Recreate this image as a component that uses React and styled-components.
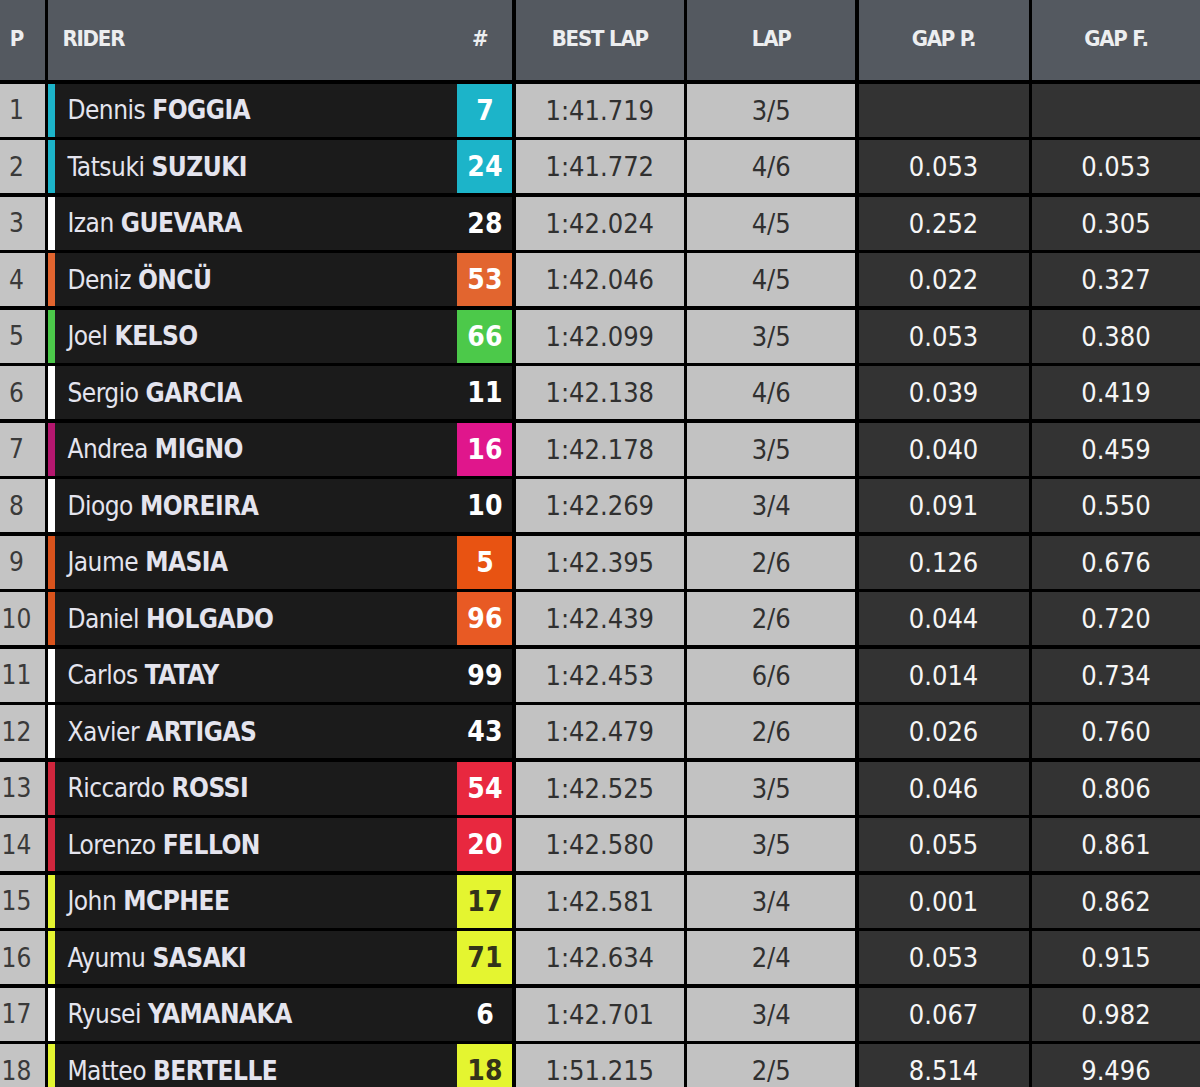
import React from "react";
import styled, { createGlobalStyle } from "styled-components";

const Global = createGlobalStyle`
  html, body { margin: 0; padding: 0; background: #000; }
  body { font-family: "DejaVu Sans Condensed", "Liberation Sans Narrow", "Open Sans", sans-serif; }
`;

const riders = [
  [1, "Dennis", "FOGGIA", "7", "#1cb4c9", "#1cb4c9", "1:41.719", "3/5", "", ""],
  [2, "Tatsuki", "SUZUKI", "24", "#1cb4c9", "#1cb4c9", "1:41.772", "4/6", "0.053", "0.053"],
  [3, "Izan", "GUEVARA", "28", "#ffffff", null, "1:42.024", "4/5", "0.252", "0.305"],
  [4, "Deniz", "ÖNCÜ", "53", "#e2652f", "#e2652f", "1:42.046", "4/5", "0.022", "0.327"],
  [5, "Joel", "KELSO", "66", "#4cc94a", "#4cc94a", "1:42.099", "3/5", "0.053", "0.380"],
  [6, "Sergio", "GARCIA", "11", "#ffffff", null, "1:42.138", "4/6", "0.039", "0.419"],
  [7, "Andrea", "MIGNO", "16", "#b5176f", "#e0168c", "1:42.178", "3/5", "0.040", "0.459"],
  [8, "Diogo", "MOREIRA", "10", "#ffffff", null, "1:42.269", "3/4", "0.091", "0.550"],
  [9, "Jaume", "MASIA", "5", "#d9531c", "#e85312", "1:42.395", "2/6", "0.126", "0.676"],
  [10, "Daniel", "HOLGADO", "96", "#d9531c", "#e85a24", "1:42.439", "2/6", "0.044", "0.720"],
  [11, "Carlos", "TATAY", "99", "#ffffff", null, "1:42.453", "6/6", "0.014", "0.734"],
  [12, "Xavier", "ARTIGAS", "43", "#ffffff", null, "1:42.479", "2/6", "0.026", "0.760"],
  [13, "Riccardo", "ROSSI", "54", "#d0263d", "#e8283f", "1:42.525", "3/5", "0.046", "0.806"],
  [14, "Lorenzo", "FELLON", "20", "#d0263d", "#e8283f", "1:42.580", "3/5", "0.055", "0.861"],
  [15, "John", "MCPHEE", "17", "#e4f530", "#e4f530", "1:42.581", "3/4", "0.001", "0.862"],
  [16, "Ayumu", "SASAKI", "71", "#e4f530", "#e4f530", "1:42.634", "2/4", "0.053", "0.915"],
  [17, "Ryusei", "YAMANAKA", "6", "#ffffff", null, "1:42.701", "3/4", "0.067", "0.982"],
  [18, "Matteo", "BERTELLE", "18", "#e4f530", "#e4f530", "1:51.215", "2/5", "8.514", "9.496"],
];

const Page = styled.div`
  width: 1200px;
  height: 1087px;
  overflow: hidden;
  background: #000;
`;

const Table = styled.div`
  display: grid;
  grid-template-columns: 45px 464px 168px 168px 170px 168px;
  column-gap: 3.4px;
  row-gap: 3.5px;
  grid-auto-rows: 53px;
  grid-template-rows: 80px;
  background: #000;
`;

const Head = styled.div`
  background: #545960;
  color: #eceef0;
  font-weight: bold;
  font-size: 22px;
  letter-spacing: -1.2px;
  display: flex;
  align-items: center;
  justify-content: ${(p) => p.$align || "center"};
  padding: ${(p) => p.$pad || "0"};
  padding-bottom: 4px;
`;

const PosCell = styled.div`
  background: #c4c4c4;
  color: #3a3a3a;
  font-size: 26px;
  display: flex;
  align-items: center;
  justify-content: center;
  padding-right: 12px;
`;

const RiderCell = styled.div`
  background: #1b1b1b;
  display: flex;
  align-items: stretch;
`;

const Strip = styled.div`
  width: 7px;
  background: ${(p) => p.$color};
`;

const Name = styled.div`
  flex: 1;
  display: flex;
  align-items: center;
  padding-left: 12px;
  color: #e4e4ee;
  font-size: 26px;
  white-space: nowrap;
  letter-spacing: -0.5px;
  b { font-weight: bold; margin-left: 7px; }
`;

const Num = styled.div`
  width: 55px;
  background: ${(p) => p.$bg || "transparent"};
  color: ${(p) => (p.$dark ? "#33331a" : "#ffffff")};
  font-weight: 800;
  font-size: 28px;
  display: flex;
  align-items: center;
  justify-content: center;
`;

const LightCell = styled.div`
  background: #c2c2c2;
  color: #303030;
  font-size: 27px;
  display: flex;
  align-items: center;
  justify-content: center;
`;

const DarkCell = styled.div`
  background: #333333;
  color: #f6f6f6;
  font-size: 27px;
  font-weight: 500;
  display: flex;
  align-items: center;
  justify-content: center;
`;

export default function App() {
  return (
    <Page>
      <Global />
      <Table>
        <Head $pad="0 12px 0 0">P</Head>
        <Head $align="space-between" $pad="0 25px 0 14px">
          <span>RIDER</span>
          <span>#</span>
        </Head>
        <Head>BEST LAP</Head>
        <Head>LAP</Head>
        <Head>GAP P.</Head>
        <Head>GAP F.</Head>
        {riders.map(([pos, first, last, num, strip, box, best, lap, gp, gf]) => (
          <React.Fragment key={pos}>
            <PosCell>{pos}</PosCell>
            <RiderCell>
              <Strip $color={strip} />
              <Name>
                {first}
                <b>{last}</b>
              </Name>
              <Num $bg={box} $dark={box === "#e4f530"}>{num}</Num>
            </RiderCell>
            <LightCell>{best}</LightCell>
            <LightCell>{lap}</LightCell>
            <DarkCell>{gp}</DarkCell>
            <DarkCell>{gf}</DarkCell>
          </React.Fragment>
        ))}
      </Table>
    </Page>
  );
}
